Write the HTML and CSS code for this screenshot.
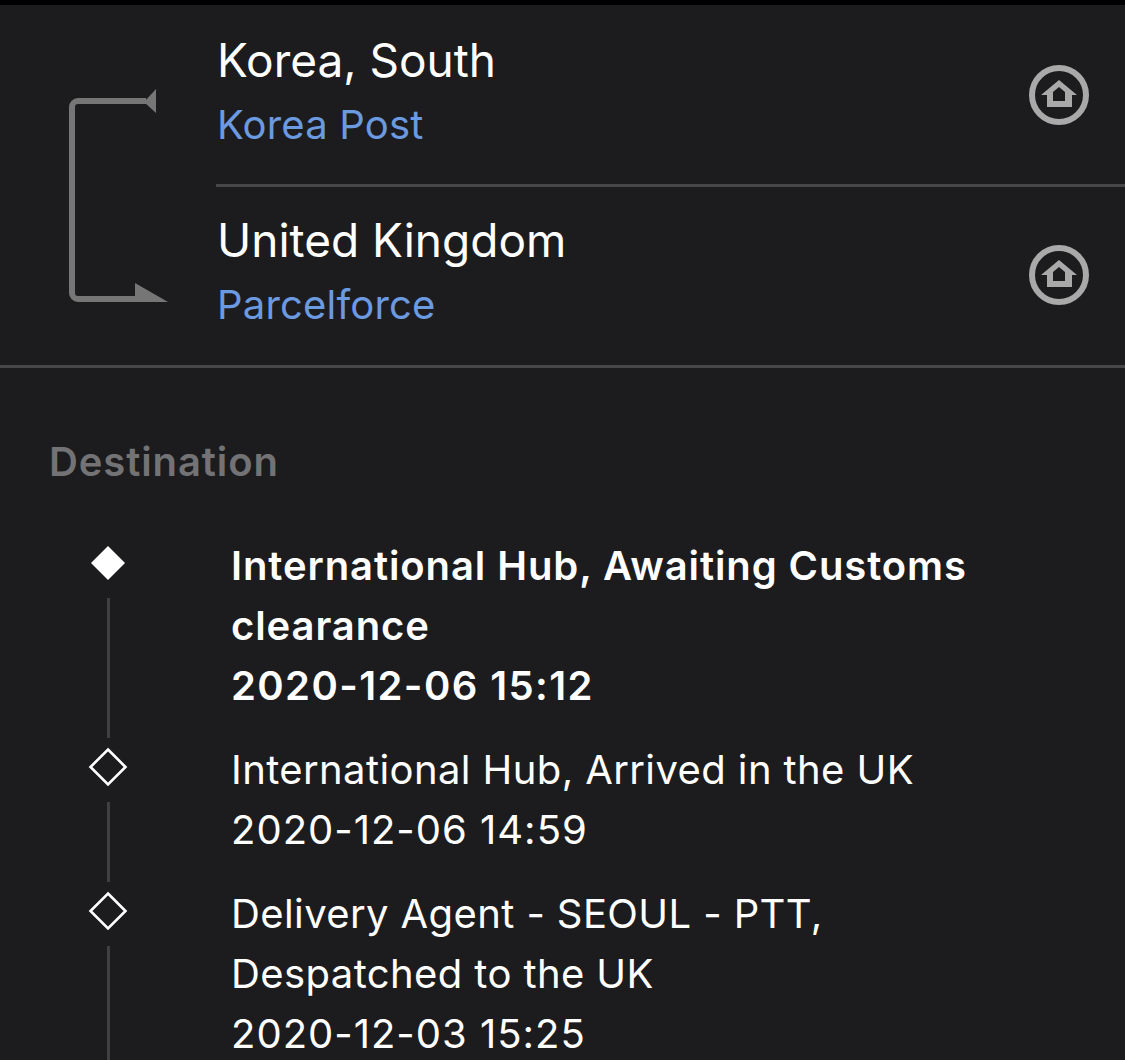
FILE: index.html
```html
<!DOCTYPE html>
<html lang="en">
<head>
<meta charset="utf-8">
<title>Tracking</title>
<link rel="stylesheet" href="styles.css">
</head>
<body>
<div class="topbar"></div>
<section class="route">
  <div class="route-icon">
    <svg width="216" height="360" viewBox="0 0 216 360" class="route-svg">
      <path d="M146 96H78a6 6 0 0 0-6 6V288a6 6 0 0 0 6 6H140" fill="none" stroke="#767676" stroke-width="6"/>
      <path d="M156 84V108L144 97Z" fill="#767676"/>
      <path d="M135 278L168 297H135Z" fill="#767676"/>
    </svg>
  </div>
  <div class="route-rows">
    <div class="route-row">
      <div class="route-text">
        <div class="country">Korea, South</div>
        <div class="carrier">Korea Post</div>
      </div>
      <svg class="home" width="60" height="60" viewBox="0 0 60 60">
        <circle cx="30" cy="30" r="27" fill="none" stroke="#a9a9a9" stroke-width="6"/>
        <path fill-rule="evenodd" fill="#a9a9a9" d="M30 15L48 30H43V42H18V30H12ZM30 22L24 27V36H36V27Z"/>
      </svg>
    </div>
    <div class="route-row">
      <div class="route-text">
        <div class="country">United Kingdom</div>
        <div class="carrier">Parcelforce</div>
      </div>
      <svg class="home" width="60" height="60" viewBox="0 0 60 60">
        <circle cx="30" cy="30" r="27" fill="none" stroke="#a9a9a9" stroke-width="6"/>
        <path fill-rule="evenodd" fill="#a9a9a9" d="M30 15L48 30H43V42H18V30H12ZM30 22L24 27V36H36V27Z"/>
      </svg>
    </div>
  </div>
</section>
<section class="timeline">
  <h2 class="section-title">Destination</h2>
  <div class="event current">
    <div class="marker">
      <svg class="diamond" width="36" height="36" viewBox="0 0 36 36"><path d="M18 1L35 18L18 35L1 18Z" fill="#fff"/></svg>
      <div class="stem"></div>
    </div>
    <div class="event-text">International Hub, Awaiting Customs<br>clearance<br><span class="stamp">2020-12-06 15:12</span></div>
  </div>
  <div class="event">
    <div class="marker">
      <svg class="diamond" width="40" height="40" viewBox="0 0 40 40"><path d="M20 2.5L37.5 20L20 37.5L2.5 20Z" fill="none" stroke="#fff" stroke-width="2.6"/></svg>
      <div class="stem"></div>
    </div>
    <div class="event-text">International Hub, Arrived in the UK<br><span class="stamp">2020-12-06 14:59</span></div>
  </div>
  <div class="event">
    <div class="marker">
      <svg class="diamond" width="40" height="40" viewBox="0 0 40 40"><path d="M20 2.5L37.5 20L20 37.5L2.5 20Z" fill="none" stroke="#fff" stroke-width="2.6"/></svg>
      <div class="stem"></div>
    </div>
    <div class="event-text">Delivery Agent - SEOUL - PTT,<br>Despatched to the UK<br><span class="stamp">2020-12-03 15:25</span></div>
  </div>
</section>
</body>
</html>
```

FILE: styles.css
```css
html, body {
  margin: 0;
  padding: 0;
  height: 1060px;
  overflow: hidden;
  background: #1c1c1e;
  color: #fff;
  font-family: Inter, "Liberation Sans", sans-serif;
}
.topbar {
  height: 5px;
  background: #000;
}
.route {
  display: flex;
  border-bottom: 3px solid #47474a;
}
.route-icon {
  width: 216px;
  flex: none;
}
.route-svg {
  display: block;
}
.route-rows {
  flex: 1;
}
.route-row {
  box-sizing: border-box;
  display: flex;
  align-items: center;
  justify-content: space-between;
  padding: 0 36px 0 1px;
}
.route-row:first-child {
  height: 182px;
  border-bottom: 3px solid #47474a;
}
.route-row:last-child {
  height: 178px;
  padding-bottom: 2px;
}
.route-text {
  display: flex;
  flex-direction: column;
  gap: 5px;
  margin-top: -5px;
}
.country {
  font-size: 46px;
  line-height: 60px;
}
.carrier {
  font-size: 40px;
  line-height: 60px;
  letter-spacing: 0.2px;
  color: #6b9ae0;
}
.home {
  flex: none;
}
.timeline {
  padding-top: 69px;
}
.section-title {
  margin: 0 0 49px 49px;
  font-size: 40px;
  line-height: 50px;
  letter-spacing: 0.9px;
  font-weight: 600;
  color: #737375;
}
.event {
  display: flex;
}
.marker {
  width: 231px;
  flex: none;
  display: flex;
  flex-direction: column;
  align-items: flex-start;
  padding-left: 88px;
  box-sizing: border-box;
}
.diamond {
  display: block;
  margin-top: 7px;
}
.current .diamond {
  margin: 9px 0 0 2px;
}
.stem {
  flex: 1;
  width: 3px;
  margin: 15px 0 2px 19px;
  background: #3f3f42;
}
.current .stem {
  margin-top: 17px;
}
.event-text {
  padding-bottom: 24px;
  font-size: 40px;
  line-height: 60px;
  letter-spacing: 0.4px;
}
.stamp {
  letter-spacing: 1px;
}
.current .event-text {
  font-weight: 600;
  letter-spacing: 0.9px;
}
.current .stamp {
  letter-spacing: 1.4px;
}
```
